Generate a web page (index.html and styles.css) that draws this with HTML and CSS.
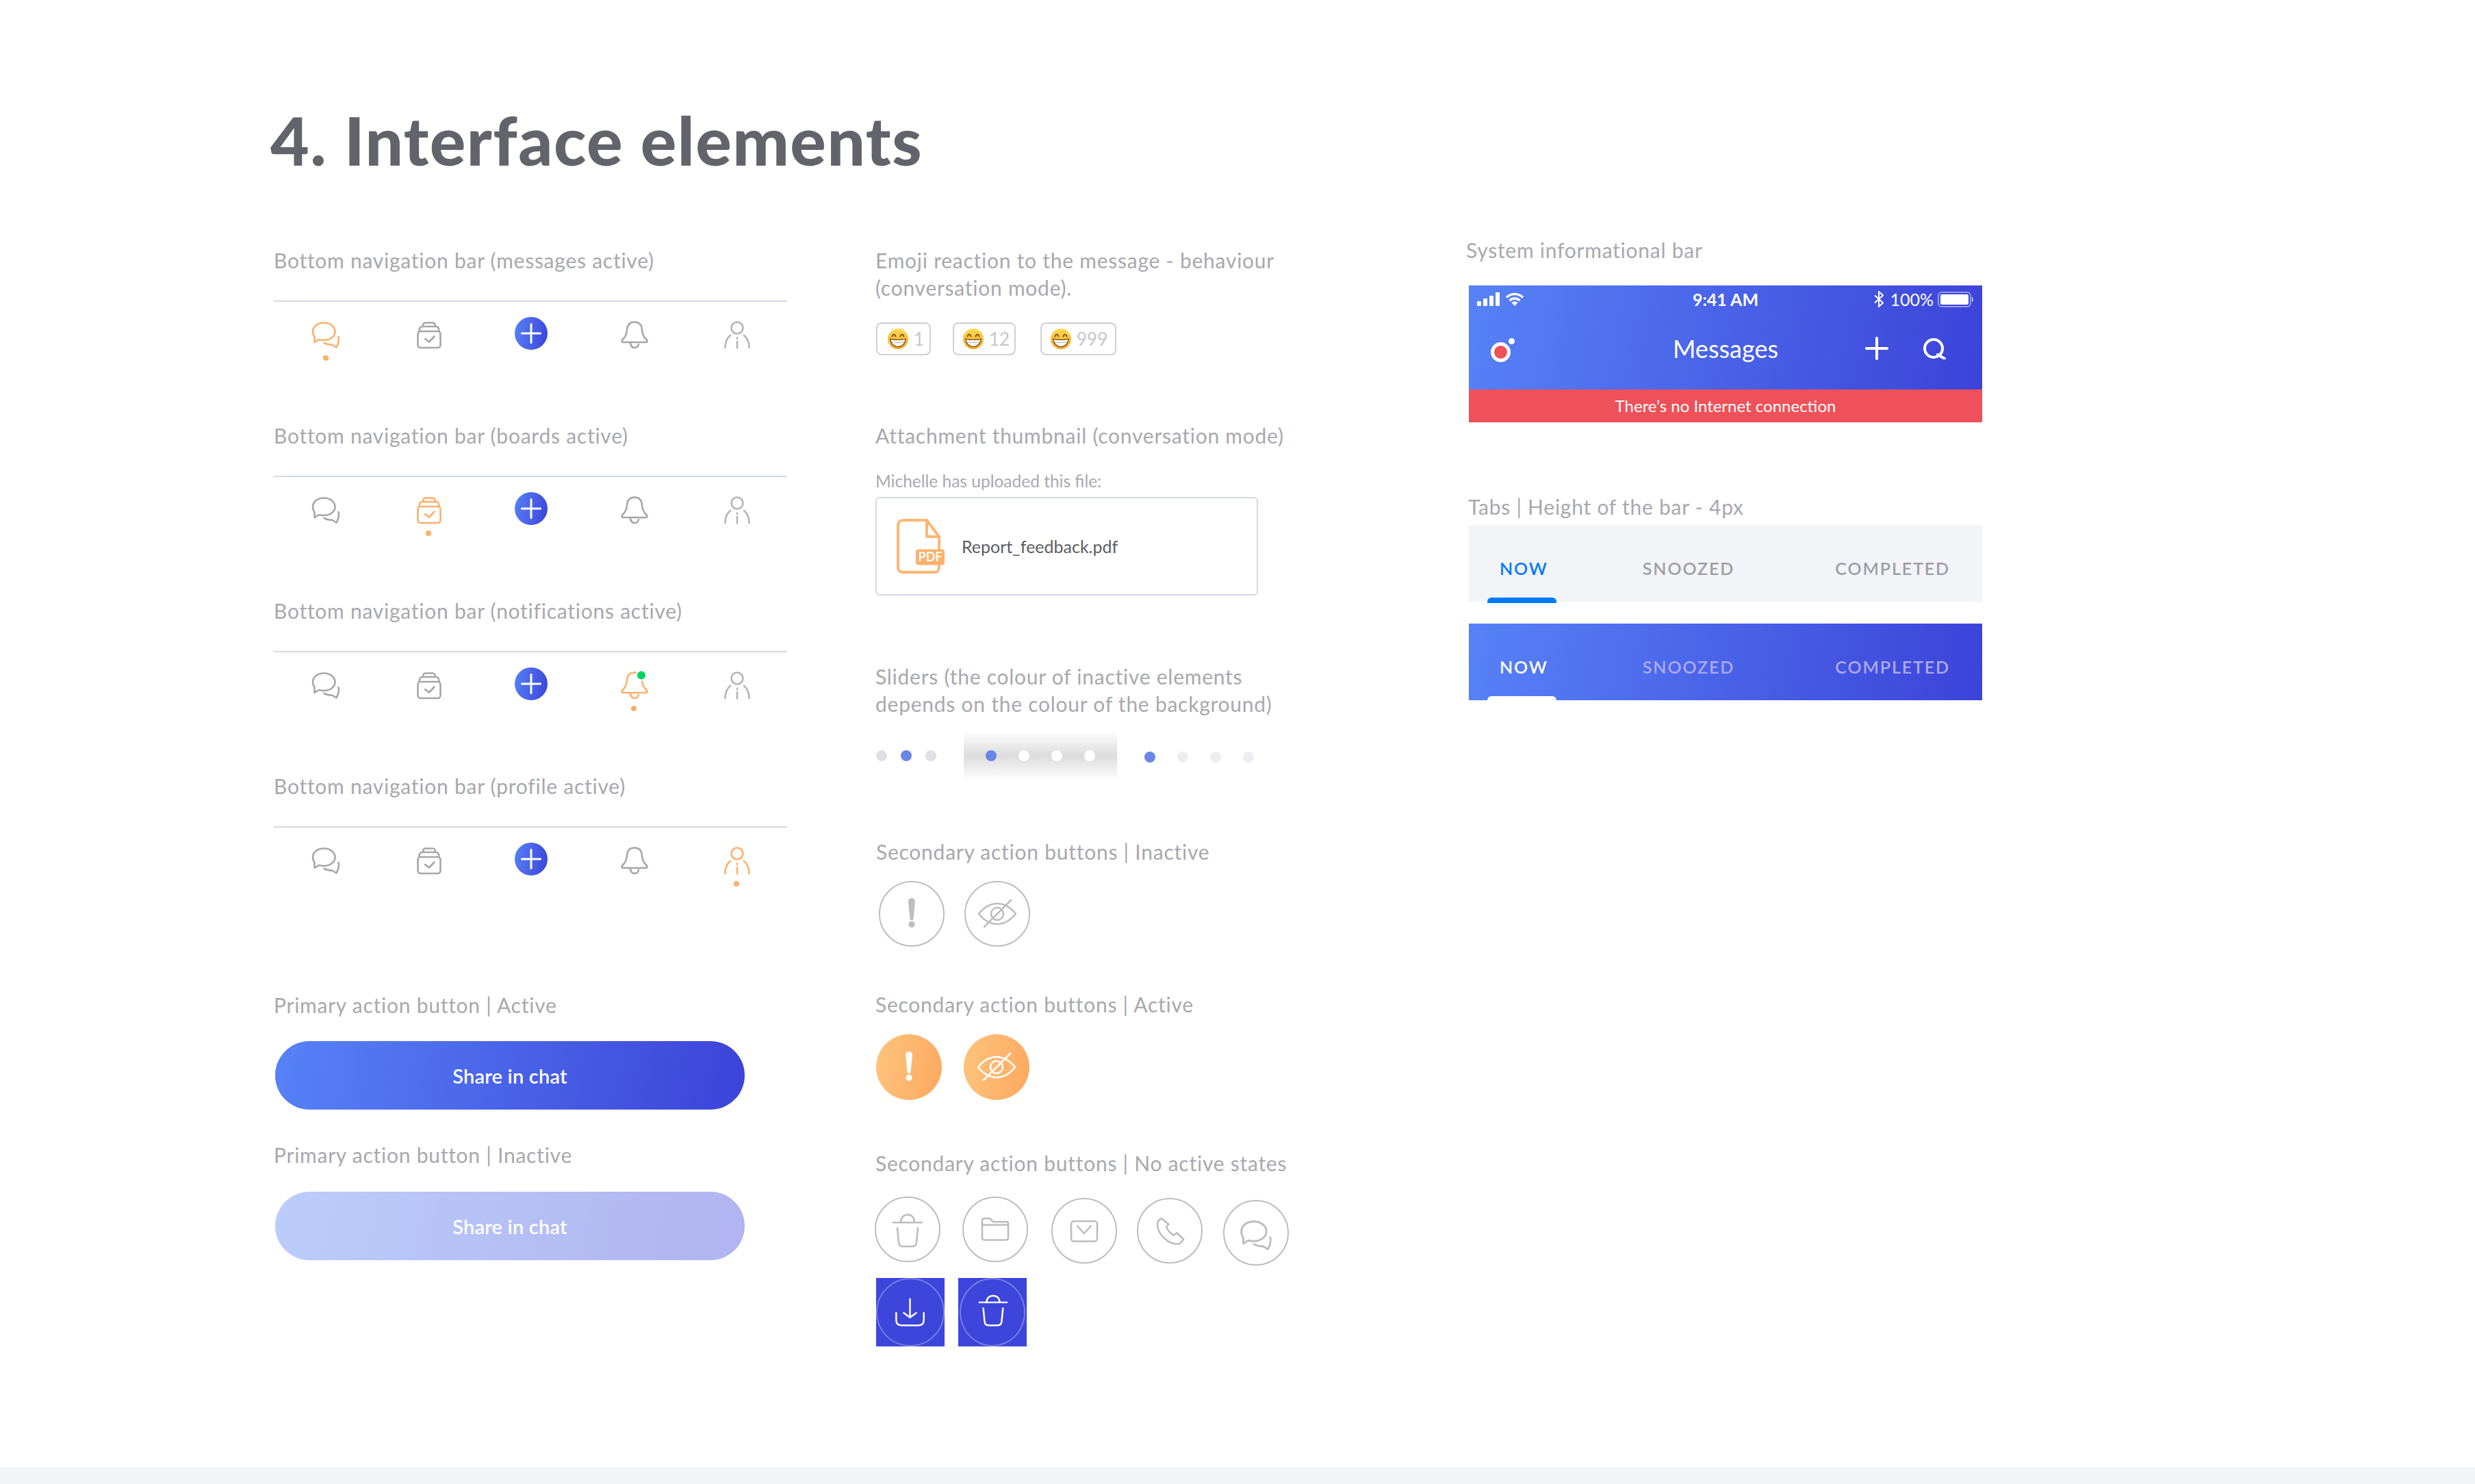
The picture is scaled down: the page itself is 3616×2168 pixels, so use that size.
FILE: index.html
```html
<!DOCTYPE html>
<html lang="en">

<head>
    <meta charset="UTF-8">
    <meta name="viewport" content="width=device-width, initial-scale=1.0">
    <link rel="stylesheet" href="styles.css">
    <title>Interface elements</title>
</head>

<body>
    <svg class="sprite" xmlns="http://www.w3.org/2000/svg">
        <defs>
            <linearGradient id="emoji-skin" x1="0" y1="0" x2="0" y2="1">
                <stop offset="0" stop-color="#ffdc55" />
                <stop offset="1" stop-color="#f3a01f" />
            </linearGradient>
        </defs>
        <symbol id="i-chat" viewBox="0 0 48 48">
            <path d="M7.5 37V29C5.5 26.5 5 24.5 5 21.5C5 14 12 8.5 21 8.5C30.5 8.5 37.5 14 37.5 21.5C37.5 29 30 34 21 34C18.5 34 16.5 33.8 14 33Z" />
            <path d="M42.5 29C43.5 33 43 38 39.5 44.5L33 40.5C29 41 25 40 21.5 38" />
        </symbol>
        <symbol id="i-board" viewBox="0 0 48 48">
            <rect x="8.5" y="21" width="33" height="24" rx="4" />
            <path d="M10.5 21C10.5 16 12 14 15 14H35C38 14 39.5 16 39.5 21" />
            <path d="M16 14C16 10 17 8.5 20 8.5H30C33 8.5 34 10 34 14" />
            <path d="M19 32L25 36.5L32.5 28.5" />
        </symbol>
        <symbol id="i-bell" viewBox="0 0 48 48">
            <path d="M25 7.5C18 7.5 14.5 12 14 19C13.5 26 12 29 8 32.5C6 34.5 6 37 9 37H41C44 37 44 34.5 42 32.5C38 29 36.5 26 36 19C35.500 12 32 7.5 25 7.5Z" />
            <path d="M19 38C19.5 43 22 45 25 45C28.5 45 30.5 42.5 31 40" />
        </symbol>
        <symbol id="i-person" viewBox="0 0 48 48">
            <circle cx="25" cy="16" r="8.5" />
            <path d="M7.5 45C7.5 38 10 31 15 27" />
            <path d="M42.5 45C42.5 38 40 31 35 27" />
            <path d="M25 36V45.5" />
            <path d="M25 30.5V32" />
        </symbol>
        <symbol id="i-eye" viewBox="0 0 96 96">
            <path d="M21 48C29 38 38 33 48 33C58 33 67 38 75 48C67 58 58 63 48 63C38 63 29 58 21 48Z" />
            <circle cx="48" cy="48" r="9" />
            <path d="M68 28L29 67" />
        </symbol>
        <symbol id="i-alert" viewBox="0 0 96 96">
            <path class="solid" d="M43 30a5 5 0 0 1 10 0L50.5 55a2.5 2.5 0 0 1-5 0Z" />
            <circle class="solid" cx="48" cy="63.5" r="4.5" />
        </symbol>
        <symbol id="i-emoji" viewBox="0 0 30 30">
            <circle class="face" cx="15" cy="15" r="15" />
            <path class="eye" d="M6.5 11.5C7 9.5 8 8.5 9 8.5C10 8.5 11 9.5 11.5 11.5" />
            <path class="eye" d="M18.5 11.5C19 9.5 20 8.5 21 8.5C22 8.5 23 9.5 23.5 11.5" />
            <path class="teeth" d="M4 15C9 17 21 17 26 15C26 21.5 21 26.5 15 26.5C9 26.5 4 21.5 4 15Z" />
            <path class="gap" d="M5 19.5C11 21 19 21 25 19.5" />
        </symbol>
    </svg>

    <main class="page">
        <h1 class="page-title">4. Interface elements</h1>

        <div class="columns">
            <section class="col col-nav">
                <div class="nav-block">
                    <h2 class="label">Bottom navigation bar (messages active)</h2>
                    <div class="nav-row">
                        <div class="nav-item active"><svg class="line-icon"><use href="#i-chat" /></svg><span class="nav-dot"></span></div>
                        <div class="nav-item"><svg class="line-icon"><use href="#i-board" /></svg></div>
                        <div class="nav-item"><span class="add-btn"><svg viewBox="0 0 48 48"><path d="M24 10.5V37.5M10.5 24H37.5" /></svg></span></div>
                        <div class="nav-item"><svg class="line-icon"><use href="#i-bell" /></svg></div>
                        <div class="nav-item person"><svg class="line-icon"><use href="#i-person" /></svg></div>
                    </div>
                </div>
                <div class="nav-block">
                    <h2 class="label">Bottom navigation bar (boards active)</h2>
                    <div class="nav-row">
                        <div class="nav-item"><svg class="line-icon"><use href="#i-chat" /></svg></div>
                        <div class="nav-item active"><svg class="line-icon"><use href="#i-board" /></svg><span class="nav-dot"></span></div>
                        <div class="nav-item"><span class="add-btn"><svg viewBox="0 0 48 48"><path d="M24 10.5V37.5M10.5 24H37.5" /></svg></span></div>
                        <div class="nav-item"><svg class="line-icon"><use href="#i-bell" /></svg></div>
                        <div class="nav-item person"><svg class="line-icon"><use href="#i-person" /></svg></div>
                    </div>
                </div>
                <div class="nav-block">
                    <h2 class="label">Bottom navigation bar (notifications active)</h2>
                    <div class="nav-row">
                        <div class="nav-item"><svg class="line-icon"><use href="#i-chat" /></svg></div>
                        <div class="nav-item"><svg class="line-icon"><use href="#i-board" /></svg></div>
                        <div class="nav-item"><span class="add-btn"><svg viewBox="0 0 48 48"><path d="M24 10.5V37.5M10.5 24H37.5" /></svg></span></div>
                        <div class="nav-item active">
                            <svg class="line-icon" viewBox="0 0 48 48">
                                <use href="#i-bell" width="48" height="48" />
                                <circle class="badge" cx="35" cy="11.5" r="7" />
                            </svg>
                            <span class="nav-dot"></span>
                        </div>
                        <div class="nav-item person"><svg class="line-icon"><use href="#i-person" /></svg></div>
                    </div>
                </div>
                <div class="nav-block">
                    <h2 class="label">Bottom navigation bar (profile active)</h2>
                    <div class="nav-row">
                        <div class="nav-item"><svg class="line-icon"><use href="#i-chat" /></svg></div>
                        <div class="nav-item"><svg class="line-icon"><use href="#i-board" /></svg></div>
                        <div class="nav-item"><span class="add-btn"><svg viewBox="0 0 48 48"><path d="M24 10.5V37.5M10.5 24H37.5" /></svg></span></div>
                        <div class="nav-item"><svg class="line-icon"><use href="#i-bell" /></svg></div>
                        <div class="nav-item active"><svg class="line-icon"><use href="#i-person" /></svg><span class="nav-dot"></span></div>
                    </div>
                </div>

                <h2 class="label primary-label">Primary action button | Active</h2>
                <button class="primary-btn">Share in chat</button>
                <h2 class="label primary-label-2">Primary action button | Inactive</h2>
                <button class="primary-btn inactive">Share in chat</button>
            </section>

            <section class="col col-mid">
                <h2 class="label two-line">Emoji reaction to the message - behaviour<br>(conversation mode).</h2>
                <div class="chips">
                    <div class="chip chip-s"><svg class="emoji"><use href="#i-emoji" /></svg>1</div>
                    <div class="chip chip-m"><svg class="emoji"><use href="#i-emoji" /></svg>12</div>
                    <div class="chip chip-l"><svg class="emoji"><use href="#i-emoji" /></svg>999</div>
                </div>

                <h2 class="label attach-label">Attachment thumbnail (conversation mode)</h2>
                <p class="upload-note">Michelle has uploaded this file:</p>
                <div class="attachment">
                    <svg class="pdf-icon" viewBox="0 0 70 80">
                        <path class="pdf-sheet" d="M44 2H10C5 2 2 5 2 10V70C2 76 5 78 10 78H54C60 78 62 76 62 70V26L44 2V26H62" />
                        <rect class="pdf-tag" x="28" y="44.500" width="42" height="23" rx="4" />
                        <text class="pdf-text" x="49" y="62">PDF</text>
                    </svg>
                    <span class="file-name">Report_feedback.pdf</span>
                </div>

                <h2 class="label two-line slider-label">Sliders (the colour of inactive elements<br>depends on the colour of the background)</h2>
                <div class="sliders">
                    <div class="dots dots-grey"><i></i><i class="on"></i><i></i></div>
                    <div class="dots dots-shade"><i class="on"></i><i></i><i></i><i></i></div>
                    <div class="dots dots-pale"><i class="on"></i><i></i><i></i><i></i></div>
                </div>

                <h2 class="label sec-inactive-label">Secondary action buttons | Inactive</h2>
                <div class="round-row gap-inactive">
                    <span class="round-btn"><svg><use href="#i-alert" /></svg></span>
                    <span class="round-btn"><svg><use href="#i-eye" /></svg></span>
                </div>

                <h2 class="label sec-active-label">Secondary action buttons | Active</h2>
                <div class="round-row gap-active">
                    <span class="round-btn on"><svg><use href="#i-alert" /></svg></span>
                    <span class="round-btn on"><svg><use href="#i-eye" /></svg></span>
                </div>

                <h2 class="label sec-none-label">Secondary action buttons | No active states</h2>
                <div class="round-row plain-row">
                    <span class="round-btn"><svg viewBox="0 0 96 96"><path d="M27 38H69" /><path d="M38 38C38 31 42 26.500 48 26.500C54 26.500 58 31 58 38" /><path d="M33 46L35 67C35.300 71 37.500 73 41 73H55C58.500 73 60.700 71 61 67L63 46" /></svg></span>
                    <span class="round-btn"><svg viewBox="0 0 96 96"><path d="M29 60V35C29 33 30 32 32 32H40L45 37H65C66.500 37 67 38 67 39V60C67 62.500 66 63.500 64 63.500H32C30 63.500 29 62.500 29 60Z" /><path d="M29 41.500H67" /></svg></span>
                    <span class="round-btn"><svg viewBox="0 0 96 96"><rect x="29" y="34" width="38" height="29.500" rx="4" /><path d="M38 41L48 52L58 41" /></svg></span>
                    <span class="round-btn"><svg viewBox="0 0 96 96"><path d="M36 30C33 31.500 30 34.500 30 38.500C30 46.500 34 53.500 40 59C46 64.500 52 68 60 67.500C63 67.500 65 64.500 68 60.500L58.500 51L54 54.500C49.500 52.500 45.500 48 43 42.500L46.500 38.500Z" /></svg></span>
                    <span class="round-btn"><svg class="chat-in-round"><use href="#i-chat" /></svg></span>
                </div>
                <div class="blue-row">
                    <span class="blue-tile">
                        <svg class="ring-wide" viewBox="0 0 100 100"><path d="M49.500 30V58M40 51L49.500 58L59 51" /><path d="M28.500 51V62C28.500 67.500 31 70 36 70H63C68 70 70.500 67.500 70.500 62V51" /></svg>
                    </span>
                    <span class="blue-tile">
                        <svg class="ring-narrow" viewBox="0 0 96 100"><path d="M28 35H70" /><path d="M39 35C39 29 43 25 49 25C55 25 59 29 59 35" /><path d="M34 44L36 64C36.300 68 38.500 70 42 70H56C59.500 70 61.700 68 62 64L64 44" /></svg>
                    </span>
                </div>
            </section>

            <section class="col col-right">
                <h2 class="label">System informational bar</h2>
                <div class="phone-bar">
                    <div class="status-bar">
                        <div class="status-left">
                            <span class="signal"><i></i><i></i><i></i><i></i></span>
                            <svg class="wifi" viewBox="0 0 28 20">
                                <path d="M2 7.500C9 1 19 1 26 7.500M6.500 12C11 8 17 8 21.500 12" />
                                <path class="wifi-tip" d="M14 20L9.500 15C12 13 16 13 18.500 15Z" />
                            </svg>
                        </div>
                        <span class="status-time">9:41 AM</span>
                        <div class="status-right">
                            <svg class="bluetooth" viewBox="0 0 14 24"><path d="M1 6.500L13 17.500L7 23V1L13 6.500L1 17.500" /></svg>
                            <span>100%</span>
                            <svg class="battery" viewBox="0 0 53 23">
                                <rect class="batt-case" x="1" y="1" width="47" height="21" rx="5" />
                                <rect class="batt-fill" x="4" y="4" width="41" height="15" rx="2.500" />
                                <path class="batt-fill" d="M50 8C52 9 52 14 50 15Z" />
                            </svg>
                        </div>
                    </div>
                    <div class="title-bar">
                        <span class="app-mark"><span class="app-moon"></span></span>
                        <span class="title-text">Messages</span>
                        <div class="title-actions">
                            <svg class="title-plus" viewBox="0 0 34 34"><path d="M17 2V32M2 17H32" /></svg>
                            <svg class="title-search" viewBox="0 0 33 31"><circle cx="15" cy="15" r="13" /><path d="M21 24L31 30" /></svg>
                        </div>
                    </div>
                </div>
                <div class="offline-bar">There’s no Internet connection</div>

                <h2 class="label tabs-label">Tabs | Height of the bar - 4px</h2>
                <div class="tabs tabs-light">
                    <span class="tab on">NOW</span>
                    <span class="tab">SNOOZED</span>
                    <span class="tab">COMPLETED</span>
                </div>
                <div class="tabs tabs-blue">
                    <span class="tab on">NOW</span>
                    <span class="tab">SNOOZED</span>
                    <span class="tab">COMPLETED</span>
                </div>
            </section>
        </div>
    </main>

    <div class="page-end"></div>
</body>

</html>
```

FILE: styles.css
```css
* {
    margin: 0;
    padding: 0;
    box-sizing: border-box;
}

html, body {
    height: 100%;
}

body {
    display: flex;
    flex-direction: column;
    background: #fff;
    font-family: "Lato", "Open Sans", sans-serif;
    color: #a3a3a9;
    overflow: hidden;
}

.sprite {
    position: absolute;
    width: 0;
    height: 0;
}

.page {
    flex: 1;
    padding: 150px 0 0 400px;
}

.page-title {
    height: 110px;
    font-size: 98px;
    line-height: 108px;
    font-weight: 900;
    color: #63636b;
    letter-spacing: 1.5px;
    margin-left: -5px;
}

.columns {
    display: flex;
    align-items: flex-start;
    margin-top: 84px;
}

.col-nav {
    width: 879px;
    padding-top: 15px;
}

.col-mid {
    width: 867px;
    padding-top: 16px;
}

.col-right {
    width: 750px;
}

.label {
    font-size: 30px;
    line-height: 42px;
    font-weight: 400;
    color: #a8a8ae;
    letter-spacing: 0.75px;
    white-space: nowrap;
}

.two-line {
    line-height: 40px;
}

/* bottom navigation */
.nav-block {
    height: 256px;
}

.nav-row {
    display: grid;
    grid-template-columns: repeat(5, 150px);
    width: 750px;
    margin-top: 38px;
    padding: 22px 0 0 1px;
    border-top: 2px solid #d5d8e5;
}

.nav-item {
    display: flex;
    flex-direction: column;
    align-items: center;
    color: #a6a6ab;
}

.nav-item.person {
    color: #b4b4b9;
}

.nav-item.active {
    color: #fdb06b;
}

.line-icon {
    width: 48px;
    height: 48px;
    fill: none;
    stroke: currentColor;
    stroke-width: 2.6;
    stroke-linejoin: round;
    stroke-linecap: round;
}

.nav-dot {
    width: 8px;
    height: 8px;
    margin-top: 8px;
    border-radius: 50%;
    background: #fdb06b;
}

.badge {
    fill: #00d563;
    stroke: #fff;
    stroke-width: 2;
}

.add-btn {
    display: block;
    width: 48px;
    height: 48px;
    border-radius: 50%;
    background: linear-gradient(100deg, #5782f7, #3c43d9);
}

.add-btn svg {
    display: block;
    width: 48px;
    height: 48px;
    fill: none;
    stroke: #fff;
    stroke-width: 3;
    stroke-linecap: round;
}

/* primary buttons */
.primary-label {
    margin-top: 64px;
}

.primary-label-2 {
    margin-top: 45px;
}

.primary-btn {
    display: block;
    width: 686px;
    height: 100px;
    margin: 32px 0 0 2px;
    border: 0;
    border-radius: 50px;
    background: linear-gradient(100deg, #5782f7, #3c43d9);
    font-family: inherit;
    font-size: 29px;
    font-weight: 600;
    letter-spacing: 0.2px;
    color: #fff;
}

.primary-btn.inactive {
    margin-top: 33px;
    opacity: 0.4;
}

/* emoji reactions */
.chips {
    display: flex;
    gap: 32px;
    margin: 31px 0 0 1px;
}

.chip {
    display: flex;
    align-items: center;
    gap: 8px;
    height: 48px;
    padding-left: 13px;
    border: 2px solid #d0d0d5;
    border-radius: 8px;
    font-size: 26px;
    color: #c6c6ca;
}

.chip-s {
    width: 80px;
    padding-left: 15px;
}

.chip-m {
    width: 92px;
}

.chip-l {
    width: 111px;
    margin-left: 4px;
}

.emoji {
    width: 30px;
    height: 30px;
    flex: none;
}

.face {
    fill: url(#emoji-skin);
}

.eye {
    fill: none;
    stroke: #6b3f0c;
    stroke-width: 1.6;
    stroke-linecap: round;
}

.teeth {
    fill: #fff;
    stroke: #6b3f0c;
    stroke-width: 1.2;
}

.gap {
    fill: none;
    stroke: #a9a9a9;
    stroke-width: 1;
}

/* attachment */
.attach-label {
    margin-top: 96px;
}

.upload-note {
    margin-top: 31px;
    font-size: 24.5px;
    line-height: 30px;
    color: #a9a9af;
}

.attachment {
    display: flex;
    align-items: center;
    gap: 25px;
    width: 559px;
    height: 144px;
    margin-top: 8px;
    padding-left: 29px;
    border: 2px solid #d5d8e5;
    border-radius: 6px;
}

.pdf-icon {
    width: 70px;
    height: 80px;
    flex: none;
}

.pdf-sheet {
    fill: none;
    stroke: #fdb672;
    stroke-width: 4;
    stroke-linejoin: round;
}

.pdf-tag {
    fill: #fdb06b;
}

.pdf-text {
    font-size: 18px;
    font-weight: 700;
    fill: #fff;
    text-anchor: middle;
}

.file-name {
    font-size: 25px;
    color: #5c5c64;
}

/* sliders */
.slider-label {
    margin-top: 98px;
}

.sliders {
    display: flex;
    align-items: center;
    gap: 40px;
    height: 72px;
    margin: 20px 0 0 1px;
}

.dots {
    display: flex;
    align-items: center;
    gap: 32px;
}

.dots i {
    display: block;
    width: 16px;
    height: 16px;
    border-radius: 50%;
}

.dots i.on {
    background: #6a86e8;
}

.dots-grey {
    gap: 20px;
}

.dots-grey i:not(.on) {
    background: #dfe0e3;
}

.dots-shade {
    width: 224px;
    height: 72px;
    padding-left: 32px;
    background: linear-gradient(to bottom, #fff, #dcdcdd 50%, #fff);
}

.dots-shade i:not(.on) {
    background: #fff;
}

.dots-pale {
    margin-top: 4px;
}

.dots-pale i:not(.on) {
    background: #eceef3;
}

/* round buttons */
.sec-inactive-label {
    margin: 83px 0 0 1px;
}

.sec-active-label {
    margin-top: 63px;
}

.sec-none-label {
    margin-top: 71px;
}

.round-row {
    display: flex;
    gap: 32px;
}

.gap-inactive {
    gap: 29px;
    margin: 22px 0 0 5px;
}

.gap-active {
    margin: 23px 0 0 1px;
}

.plain-row {
    height: 119px;
    margin: 28px 0 0 -1px;
}

.plain-row .round-btn:nth-child(3) {
    margin: 2px 0 0 2px;
}

.plain-row .round-btn:nth-child(4) {
    margin: 2px 0 0 -3px;
}

.plain-row .round-btn:nth-child(5) {
    margin: 5px 0 0 -2px;
}

.round-btn {
    display: flex;
    align-items: center;
    justify-content: center;
    width: 96px;
    height: 96px;
    border: 2px solid #bdbdbd;
    border-radius: 50%;
    color: #bdbdbd;
}

.round-btn.on {
    border: 0;
    background: linear-gradient(100deg, #fec47e, #fda85f);
    color: #fff;
}

.round-btn svg {
    flex: none;
    width: 96px;
    height: 96px;
    fill: none;
    stroke: currentColor;
    stroke-width: 2.6;
    stroke-linejoin: round;
    stroke-linecap: round;
}

.solid {
    fill: currentColor;
    stroke: none;
}

.round-btn svg.chat-in-round {
    width: 54px;
    height: 54px;
    margin-top: 2px;
}

.blue-row {
    display: flex;
    gap: 20px;
    margin-left: 1px;
}

.blue-tile {
    display: flex;
    align-items: center;
    justify-content: center;
    width: 100px;
    height: 100px;
    background: #3d45db;
    color: #fff;
}

.blue-tile svg {
    height: 100px;
    border: 2px solid rgba(255, 255, 255, 0.3);
    border-radius: 50%;
    fill: none;
    stroke: currentColor;
    stroke-width: 2.6;
    stroke-linejoin: round;
    stroke-linecap: round;
}

.ring-wide {
    width: 100px;
}

.ring-narrow {
    width: 96px;
}

/* phone bar */
.col-right .label {
    margin-left: -4px;
}

.phone-bar {
    height: 152px;
    margin-top: 31px;
    background: linear-gradient(100deg, #5782f7, #3c43d9);
    color: #fff;
}

.status-bar {
    display: grid;
    grid-template-columns: 1fr auto 1fr;
    align-items: center;
    height: 40px;
    padding: 0 12px;
    font-size: 25px;
    font-weight: 700;
}

.status-left,
.status-right {
    display: flex;
    align-items: center;
}

.status-left {
    gap: 8px;
}

.status-right {
    justify-content: flex-end;
    font-weight: 400;
    font-size: 25px;
}

.signal {
    display: flex;
    align-items: flex-end;
    gap: 3px;
    height: 20px;
}

.signal i {
    display: block;
    width: 6px;
    border-radius: 1px;
    background: #fff;
}

.signal i:nth-child(1) { height: 7px; }
.signal i:nth-child(2) { height: 11px; }
.signal i:nth-child(3) { height: 15px; }
.signal i:nth-child(4) { height: 20px; }

.wifi {
    width: 28px;
    height: 20px;
    fill: none;
    stroke: #fff;
    stroke-width: 3.4;
}

.wifi-tip {
    fill: #fff;
    stroke: none;
}

.bluetooth {
    width: 14px;
    height: 24px;
    margin-right: 9px;
    fill: none;
    stroke: #fff;
    stroke-width: 2;
}

.battery {
    width: 53px;
    height: 23px;
    margin-left: 6px;
}

.batt-case {
    fill: none;
    stroke: rgba(255, 255, 255, 0.45);
    stroke-width: 2;
}

.batt-fill {
    fill: #fff;
}

.title-bar {
    display: grid;
    grid-template-columns: 1fr auto 1fr;
    align-items: center;
    height: 112px;
    padding: 0 32px 8px;
}

.app-mark {
    position: relative;
    display: block;
    width: 29px;
    height: 29px;
    margin-top: 10px;
    border: 5px solid #fff;
    border-radius: 50%;
    background: #ef5159;
}

.app-moon {
    position: absolute;
    top: -11px;
    left: 21px;
    width: 9px;
    height: 9px;
    border-radius: 50%;
    background: #fff;
}

.title-text {
    font-size: 36px;
    color: #fff;
}

.title-actions {
    display: flex;
    align-items: center;
    justify-content: flex-end;
    gap: 51px;
    margin-right: 21px;
}

.title-plus {
    width: 34px;
    height: 34px;
    fill: none;
    stroke: #fff;
    stroke-width: 4;
    stroke-linecap: round;
}

.title-search {
    width: 33px;
    height: 31px;
    fill: none;
    stroke: #fff;
    stroke-width: 4;
    stroke-linecap: round;
}

.offline-bar {
    height: 48px;
    background: #ee5159;
    font-size: 24px;
    line-height: 48px;
    text-align: center;
    color: #fff;
}

/* tabs */
.tabs-label {
    margin-top: 102px;
}

.col-right .tabs-label {
    margin-left: -1px;
}

.tabs {
    position: relative;
    display: flex;
    align-items: center;
    gap: 143px;
    height: 112px;
    padding: 14px 0 0 45px;
    font-size: 25px;
    font-weight: 600;
    letter-spacing: 1.9px;
}

.tab:nth-child(2) {
    margin-left: -5px;
}

.tab:nth-child(3) {
    margin-left: 4px;
}

.tabs-light {
    margin-top: 6px;
    background: #f2f4f8;
    color: #9e9ea5;
}

.tabs-blue {
    margin-top: 32px;
    background: linear-gradient(100deg, #5782f7, #3c43d9);
    color: #aeaaf0;
}

.tab {
    position: relative;
}

.tabs-light .tab.on {
    color: #007aff;
}

.tabs-blue .tab.on {
    color: #fff;
}

.tab.on::after {
    content: "";
    position: absolute;
    left: -18px;
    top: 58px;
    width: 101px;
    height: 8px;
    border-radius: 6px 6px 0 0;
    background: currentColor;
}

.page-end {
    flex: none;
    height: 25px;
    background: #f2f4f8;
}
```
